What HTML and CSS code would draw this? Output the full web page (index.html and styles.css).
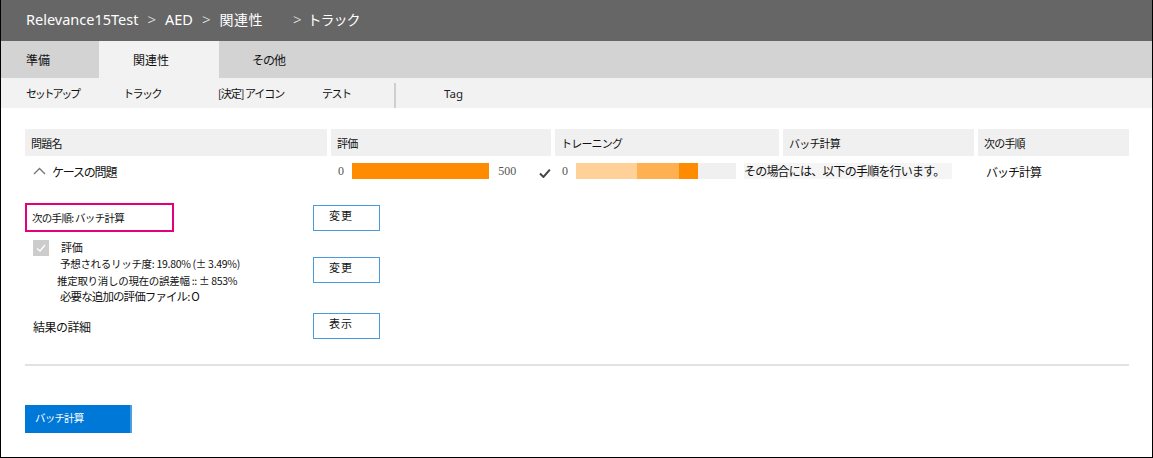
FILE: index.html
```html
<!DOCTYPE html>
<html lang="ja">
<head>
<meta charset="utf-8">
<link rel="stylesheet" href="styles.css">
</head>
<body>
<div class="frame">
  <header class="topbar">
    <span class="crumb">Relevance15Test</span>
    <span class="sep">&gt;</span>
    <span class="crumb">AED</span>
    <span class="sep">&gt;</span>
    <span class="crumb jp">関連性</span>
    <span class="sep wide">&gt;</span>
    <span class="crumb jp tight">トラック</span>
  </header>
  <nav class="tabs">
    <div class="tab t1">準備</div>
    <div class="tab t2 active">関連性</div>
    <div class="tab t3">その他</div>
  </nav>
  <nav class="subnav">
    <span class="sub s1">セットアップ</span>
    <span class="sub s2">トラック</span>
    <span class="sub s3">[決定] アイコン</span>
    <span class="sub s4">テスト</span>
    <span class="divider"></span>
    <span class="sub s5">Tag</span>
  </nav>
  <main class="content">
    <div class="grid head">
      <div class="hcell">問題名</div>
      <div class="hcell">評価</div>
      <div class="hcell">トレーニング</div>
      <div class="hcell">バッチ計算</div>
      <div class="hcell">次の手順</div>
    </div>
    <div class="grid row">
      <div class="cell name">
        <svg class="chev" width="13" height="8" viewBox="0 0 13 8"><polyline points="1,7 6.5,1.5 12,7" fill="none" stroke="#777" stroke-width="1.4"/></svg>
        <span>ケースの問題</span>
      </div>
      <div class="cell rating">
        <span class="num">0</span>
        <span class="bar full"></span>
        <span class="num n500">500</span>
        <svg class="tick" width="12" height="10" viewBox="0 0 12 10"><polyline points="1,5.5 4.5,9 11,1.5" fill="none" stroke="#444" stroke-width="2"/></svg>
      </div>
      <div class="cell training">
        <span class="num">0</span>
        <span class="tbar">
          <span class="seg seg1"></span><span class="seg seg2"></span><span class="seg seg3"></span>
        </span>
        <span class="note">その場合には、以下の手順を行います。</span>
      </div>
      <div class="cell next">バッチ計算</div>
    </div>

    <section class="details">
      <div class="drow r1">
        <div class="dlabel"><div class="pinkbox">次の手順: バッチ計算</div></div>
        <button class="obtn">変更</button>
      </div>
      <div class="drow r2">
        <div class="dlabel evalblock">
          <span class="chk"><svg width="16" height="16" viewBox="0 0 16 16"><polyline points="4,8.5 7,11 12,5" fill="none" stroke="#fff" stroke-width="1.3"/></svg></span>
          <div class="lines">
            <div class="ltitle">評価</div>
            <div class="l">予想されるリッチ度: 19.80% (± 3.49%)</div>
            <div class="l l2">推定取り消しの現在の誤差幅 :: ± 853%</div>
            <div class="l big">必要な追加の評価ファイル: O</div>
          </div>
        </div>
        <button class="obtn">変更</button>
      </div>
      <div class="drow r3">
        <div class="dlabel plain">結果の詳細</div>
        <button class="obtn">表示</button>
      </div>
    </section>
    <hr class="rule">
    <button class="primary">バッチ計算</button>
  </main>
</div>
</body>
</html>
```
FILE: styles.css
```css
* { box-sizing: border-box; }
html, body { margin: 0; padding: 0; background: #fff; }
body {
  font-family: "Noto Sans", "Noto Sans CJK JP", sans-serif;
  color: #111;
}
.frame {
  width: 1153px;
  height: 458px;
  border: 1px solid #000;
  border-top: 0;
  overflow: hidden;
  display: flex;
  flex-direction: column;
}
.topbar {
  height: 41px;
  background: #666666;
  color: #fff;
  display: flex;
  align-items: center;
  padding-left: 25px;
  font-size: 14.5px;
  padding-bottom: 4px;
}
.topbar .crumb { font-family: "Noto Sans", "Noto Sans CJK JP", sans-serif; }
.topbar .jp { font-size: 14px; letter-spacing: 0.5px; }
.topbar .tight { letter-spacing: -1px; }
.topbar .sep { margin: 0 9px 0 9px; font-weight: 300; color: #eee; font-size: 15px; }
.topbar .sep.wide { margin-left: 30px; margin-right: 6px; }
.tabs {
  height: 37px;
  background: #d3d3d3;
  display: flex;
  font-size: 12px;
  font-family: "Noto Sans CJK JP", sans-serif;
}
.tab { display: flex; align-items: center; }
.t1 { padding-left: 25px; width: 98px; }
.t2 { width: 120px; padding-left: 34px; background: #f2f2f2; }
.t3 { padding-left: 33px; letter-spacing: -1px; }
.subnav {
  height: 30px;
  background: #f2f2f2;
  display: flex;
  align-items: center;
  font-size: 11px;
  font-family: "Noto Sans CJK JP", sans-serif;
  letter-spacing: -1px;
}
.sub { display: inline-block; }
.s1 { margin-left: 25px; width: 97px; letter-spacing: -2.2px; }
.s2 { width: 95px; letter-spacing: -1.5px; }
.s3 { width: 104px; }
.s4 { width: 72px; letter-spacing: -1.5px; }
.divider { width: 2px; height: 25px; background: #cfcfcf; align-self: flex-end; }
.s5 { margin-left: 48px; font-family: "Noto Sans", sans-serif; letter-spacing: 0; font-size: 11.5px; color: #222; }
.content {
  flex: 1;
  padding: 21px 23px 0 24px;
  display: flex;
  flex-direction: column;
}
.grid {
  display: grid;
  grid-template-columns: 302px 220px 224px 191px 1fr;
  column-gap: 4px;
}
.head { height: 27px; }
.hcell {
  background: #f0f0f0;
  display: flex;
  align-items: center;
  padding-left: 6px;
  font-size: 11px;
  font-family: "Noto Sans CJK JP", sans-serif;
  letter-spacing: -0.8px;
}
.row { height: 30px; align-items: center; }
.cell { display: flex; align-items: center; font-family: "Noto Sans CJK JP", sans-serif; font-size: 12px; }
.name { padding-left: 8px; letter-spacing: -1.2px; }
.chev { margin-right: 6px; }
.num { font-family: "Liberation Serif", serif; font-size: 12px; color: #555; }
.rating { padding-left: 7px; }
.bar.full { width: 139px; height: 16px; background: #ff8c00; margin-left: 8px; }
.n500 { margin-left: 9px; }
.tick { margin-left: 23px; margin-top: 3px; }
.training { grid-column: 3 / span 2; padding-left: 7px; }
.tbar { display: flex; width: 160px; height: 16px; background: #f0f0f0; margin-left: 8px; }
.seg1 { width: 61px; background: #ffd199; }
.seg2 { width: 42px; background: #ffb050; }
.seg3 { width: 19px; background: #ff8c00; }
.note {
  margin-left: 4px;
  width: 212px;
  height: 16px;
  line-height: 16px;
  padding-left: 4px;
  background: linear-gradient(to right, #fff 0, #fff 4px, #f5f5f5 4px);
  letter-spacing: -0.8px;
  font-size: 12px;
}
.next { padding-left: 8px; letter-spacing: -1px; }
.details { display: flex; flex-direction: column; margin-top: 17px; }
.drow { display: flex; align-items: center; }
.dlabel { width: 288px; font-family: "Noto Sans CJK JP", sans-serif; }
.pinkbox {
  width: 149px;
  height: 29px;
  border: 2px solid #e3007f;
  display: flex;
  align-items: center;
  padding-left: 5px;
  font-size: 10.5px;
  letter-spacing: -0.7px;
}
.obtn {
  width: 67px;
  height: 26px;
  border: 1px solid #4a9ae0;
  background: #fff;
  font-family: "Noto Sans CJK JP", sans-serif;
  font-size: 11px;
  color: #111;
  padding: 0 0 6px 15px;
  text-align: left;
  letter-spacing: 1px;
}
.r2 { margin-top: 7px; }
.evalblock { display: flex; padding-left: 8px; }
.chk { width: 16px; height: 16px; background: #cccccc; display: block; margin-top: 1px; }
.chk svg { display: block; }
.lines { margin-left: 11px; font-size: 10.5px; letter-spacing: -0.3px; }
.ltitle { font-size: 11px; height: 17px; margin-left: 1px; line-height: 12px; padding-top: 2px; }
.l { line-height: 16.5px; white-space: nowrap; }
.l2 { margin-left: -3px; }
.l.big { font-size: 11.5px; line-height: 15px; letter-spacing: -0.9px; }
.r2 .obtn { align-self: flex-start; margin-top: 18px; }
.r3 { margin-top: 9px; }
.plain { padding-left: 8px; font-size: 12px; letter-spacing: -0.5px; }
.rule { margin: 25px 0 0 0; border: 0; height: 2px; background: #e2e2e2; }
.primary {
  margin-top: 39px;
  width: 107px;
  height: 28px;
  background: #0078d7;
  border: 0;
  border-right: 2px solid #4c9be3;
  color: #fff;
  font-family: "Noto Sans CJK JP", sans-serif;
  font-size: 10.5px;
  text-align: left;
  padding: 0 0 4px 10px;
  letter-spacing: -0.8px;
}
```
